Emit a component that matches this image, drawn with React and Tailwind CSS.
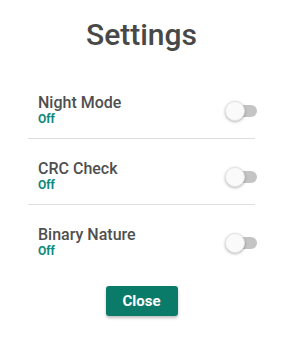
const settings = [
  { id: 'night', label: 'Night Mode' },
  { id: 'crc', label: 'CRC Check' },
  { id: 'binary', label: 'Binary Nature' },
]

function Toggle() {
  return (
    <div className="relative mr-[-2px] mt-[3px] h-5 w-8 shrink-0">
      <div className="absolute right-0 top-1 h-3 w-[30px] rounded-full bg-[#c4c4c4]" />
      <div className="absolute left-0 top-0 h-5 w-5 rounded-full border border-[#e6e6e6] bg-[#fafafa] shadow-[0_1px_3px_rgba(0,0,0,0.3)]" />
    </div>
  )
}

function App() {
  return (
    <div
      className="h-[344px] w-[283px] bg-white"
      style={{ fontFamily: 'Roboto, "Liberation Sans", sans-serif' }}
    >
      <h1 className="pt-[17px] text-center text-[30px] font-medium leading-9 text-[#484848]">
        Settings
      </h1>
      <div className="mt-5 px-7">
        {settings.map((item, i) => (
          <div
            key={item.id}
            className={
              'flex items-center justify-between pb-[13px] pt-5 ' +
              (i < settings.length - 1 ? 'border-b border-[#dedede]' : '')
            }
          >
            <div className="pl-[10px]">
              <div className="text-base font-medium leading-5 text-[#4f4f4f]">{item.label}</div>
              <div className="text-xs font-bold leading-3 text-[#0e8a7a]">Off</div>
            </div>
            <Toggle />
          </div>
        ))}
      </div>
      <div className="mt-4 flex justify-center">
        <button
          type="button"
          className="h-[30px] w-[72px] rounded-[3px] bg-[#0a7a69] text-[15px] font-bold text-white shadow-[0_2px_3px_rgba(0,0,0,0.25)]"
        >
          Close
        </button>
      </div>
    </div>
  )
}

export default App
